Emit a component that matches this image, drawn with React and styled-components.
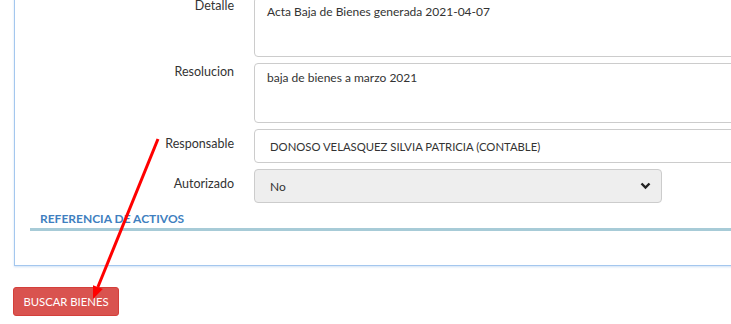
import React from "react";
import styled, { createGlobalStyle } from "styled-components";

const GlobalStyle = createGlobalStyle`
  html, body {
    margin: 0;
    padding: 0;
    background: #fff;
    overflow: hidden;
  }
  body {
    font-family: "Lato", "Noto Sans", "Liberation Sans", sans-serif;
    font-size: 12px;
    color: #333;
  }
`;

const Page = styled.div`
  position: relative;
  display: flow-root;
  width: 731px;
  height: 324px;
  overflow: hidden;
`;

const Panel = styled.div`
  margin: -20px 0 0 14px;
  width: 820px;
  padding: 16px 0 34px 0;
  border: 1px solid #a4c7ee;
  box-shadow: 0 1px 2px rgba(120, 170, 230, 0.35);
  background: #fff;
`;

const Row = styled.div`
  display: grid;
  grid-template-columns: 220px 1fr;
  column-gap: 19px;
  margin-bottom: 6px;
`;

const Label = styled.label`
  text-align: right;
  padding: ${p => (p.single ? 7 : 1)}px 1px 0 0;
  font-size: 12.5px;
  line-height: 16px;
  color: #333;
`;

const Area = styled.div`
  height: ${p => p.h}px;
  box-sizing: border-box;
  border: 1px solid #ccc;
  border-radius: 4px;
  padding: 5px 12px;
  font-size: 12px;
  line-height: 18px;
  color: #333;
  background: #fff;
`;

const Field = styled.div`
  height: 34px;
  box-sizing: border-box;
  width: ${p => (p.w ? `${p.w}px` : "auto")};
  display: flex;
  align-items: center;
  justify-content: space-between;
  border: 1px solid #ccc;
  border-radius: 4px;
  padding: 0 10px 0 15px;
  font-size: ${p => (p.caps ? 11.3 : 12)}px;
  color: #333;
  background: ${p => (p.disabled ? "#eeeeee" : "#fff")};
`;

const Heading = styled.div`
  margin: 8px 0 0 15px;
  padding: 0 0 1px 10px;
  border-bottom: 3px solid #a7cbd7;
  font-size: 12px;
  line-height: 16px;
  font-weight: 700;
  color: #3f7fc0;
`;

const Button = styled.button`
  margin: 21px 0 0 13px;
  width: 106px;
  height: 29px;
  border: 1px solid #d43f3a;
  border-radius: 3px;
  background: #d9534f;
  color: #fff;
  font-family: "Lato", "Noto Sans", "Liberation Sans", sans-serif;
  font-size: 11.3px;
  padding: 0;
`;

const Overlay = styled.svg`
  position: absolute;
  left: 0;
  top: 0;
  pointer-events: none;
`;

const Chevron = () => (
  <svg width="11" height="8" viewBox="0 0 11 8">
    <path d="M1.5 1.5 L5.5 5.5 L9.5 1.5" fill="none" stroke="#222" strokeWidth="2.4" />
  </svg>
);

export default function App() {
  return (
    <Page>
      <GlobalStyle />
      <Panel>
        <Row>
          <Label>Detalle</Label>
          <Area h={60}>Acta Baja de Bienes generada 2021-04-07</Area>
        </Row>
        <Row>
          <Label>Resolucion</Label>
          <Area h={60}>baja de bienes a marzo 2021</Area>
        </Row>
        <Row>
          <Label single>Responsable</Label>
          <Field caps>DONOSO VELASQUEZ SILVIA PATRICIA (CONTABLE)</Field>
        </Row>
        <Row>
          <Label single>Autorizado</Label>
          <Field w={408} disabled>
            No
            <Chevron />
          </Field>
        </Row>
        <Heading>REFERENCIA DE ACTIVOS</Heading>
      </Panel>
      <Button>BUSCAR BIENES</Button>
      <Overlay width="731" height="324" viewBox="0 0 731 324">
        <line x1="158" y1="139" x2="97.9" y2="287" stroke="#ff0000" strokeWidth="3" />
        <polygon points="93,299 102.8,289 93,285.2" fill="#ff0000" />
      </Overlay>
    </Page>
  );
}
